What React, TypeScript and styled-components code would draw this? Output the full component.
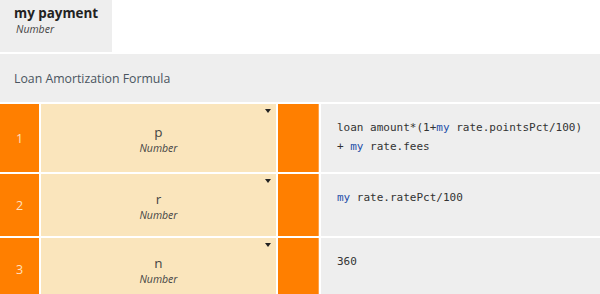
import React from "react";
import styled, { createGlobalStyle } from "styled-components";

const Global = createGlobalStyle`
  html, body { margin: 0; padding: 0; background: #fff; }
  body { font-family: "Open Sans", "Liberation Sans", sans-serif; }
`;

const Page = styled.div`
  width: 600px;
  height: 294px;
  overflow: hidden;
  display: flex;
  flex-direction: column;
  gap: 2px;
  & > * { flex-shrink: 0; }
`;

const Header = styled.div`
  width: 112px;
  height: 52px;
  background: #eeeeee;
  box-sizing: border-box;
  padding: 4px 0 0 14px;
  display: flex;
  flex-direction: column;
`;

const Title = styled.div`
  font-size: 13.4px;
  font-weight: 700;
  color: #222;
  line-height: 18px;
`;

const TypeLabel = styled.div`
  font-size: 10.5px;
  font-style: italic;
  color: #444;
  line-height: 14px;
`;

const HeaderType = styled(TypeLabel)`
  padding-left: 2px;
`;

const Band = styled.div`
  height: 48px;
  background: #eeeeee;
  display: flex;
  align-items: center;
  padding-left: 14px;
  font-size: 12.3px;
  color: #4a5560;
`;

const Table = styled.div`
  display: grid;
  grid-template-columns: 39px 235px 41px 1fr;
  column-gap: 2px;
  row-gap: 2px;
`;

const Index = styled.div`
  background: #ff7f00;
  color: #ffe2c2;
  font-size: 12.5px;
  display: flex;
  align-items: center;
  justify-content: center;
`;

const Param = styled.div`
  position: relative;
  background: #fae5bc;
  min-height: 62px;
  display: flex;
  flex-direction: column;
  align-items: center;
  justify-content: center;
  padding-top: 2px;
  box-sizing: border-box;
`;

const ParamName = styled.div`
  font-size: 13.5px;
  color: #444;
  line-height: 17px;
`;

const Caret = styled.div`
  position: absolute;
  top: 5px;
  right: 5px;
  width: 0;
  height: 0;
  border-left: 3.5px solid transparent;
  border-right: 3.5px solid transparent;
  border-top: 4px solid #222;
`;

const Handle = styled.div`
  background: #ff7f00;
  box-shadow: inset -1px 0 0 #ffa24a;
`;

const Code = styled.div`
  background: #eeeeee;
  padding: 15px 16px 16px 16px;
  font-family: "DejaVu Sans Mono", "Liberation Mono", monospace;
  font-size: 11px;
  line-height: 18.5px;
  color: #333;
  white-space: pre;
`;

const Kw = styled.span`
  color: #1e4ea8;
`;

type Row = { n: number; name: string; code: React.ReactNode };

const rows: Row[] = [
  {
    n: 1,
    name: "p",
    code: (
      <>
        loan amount*(1+<Kw>my</Kw> rate.pointsPct/100){"\n"}+ <Kw>my</Kw> rate.fees
      </>
    ),
  },
  { n: 2, name: "r", code: (<><Kw>my</Kw> rate.ratePct/100</>) },
  { n: 3, name: "n", code: "360" },
];

export default function App() {
  return (
    <>
      <Global />
      <Page>
        <Header>
          <Title>my payment</Title>
          <HeaderType>Number</HeaderType>
        </Header>
        <Band>Loan Amortization Formula</Band>
        <Table>
          {rows.map((r) => (
            <React.Fragment key={r.n}>
              <Index>{r.n}</Index>
              <Param>
                <Caret />
                <ParamName>{r.name}</ParamName>
                <TypeLabel>Number</TypeLabel>
              </Param>
              <Handle />
              <Code>{r.code}</Code>
            </React.Fragment>
          ))}
        </Table>
      </Page>
    </>
  );
}
